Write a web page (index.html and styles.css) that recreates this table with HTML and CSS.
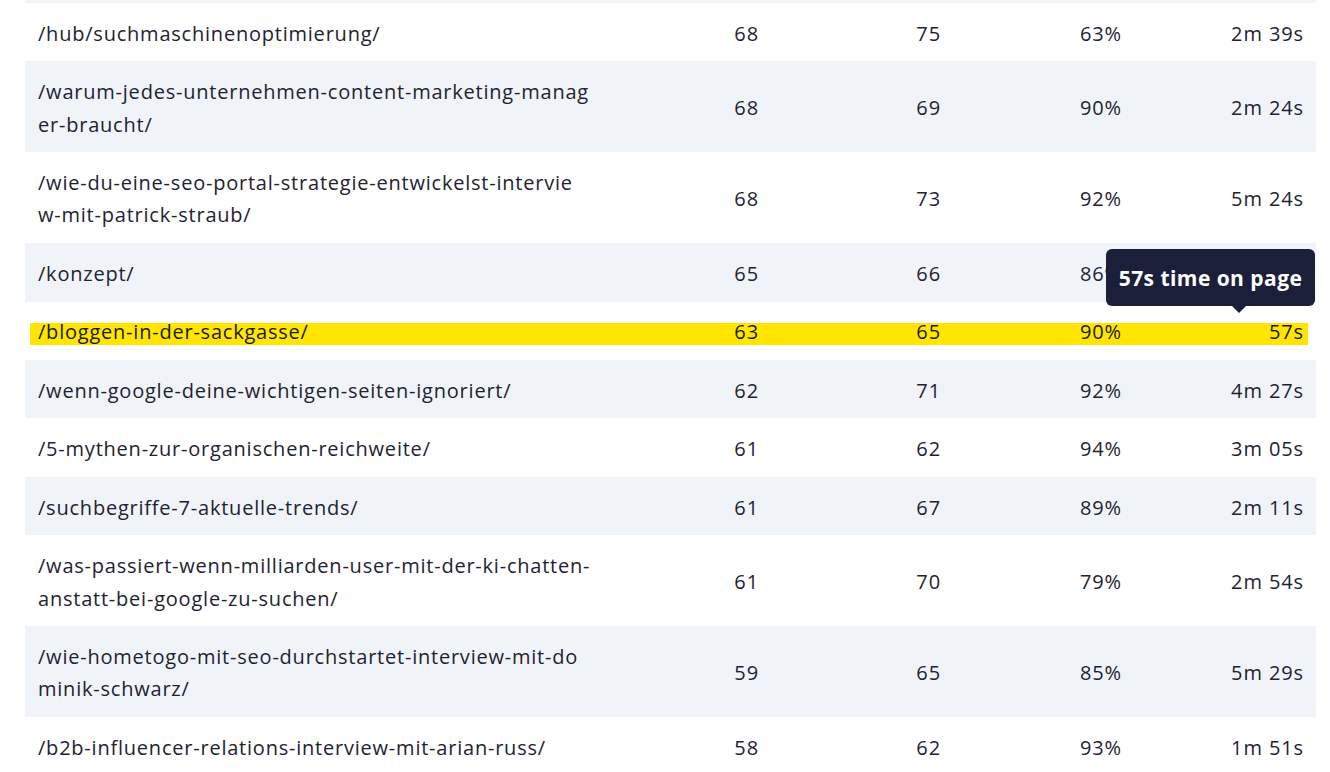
FILE: index.html
```html
<!DOCTYPE html>
<html lang="de">
<head>
<meta charset="utf-8">
<title>Seiten</title>
<link rel="stylesheet" href="styles.css">
</head>
<body>
<div class="table">
  <div class="row alt">
    <div class="cell path">/content-marketing/</div>
    <div class="cell num">69</div>
    <div class="cell num">74</div>
    <div class="cell num">88%</div>
    <div class="cell num">3m 12s</div>
  </div>
  <div class="row">
    <div class="cell path">/hub/suchmaschinenoptimierung/</div>
    <div class="cell num">68</div>
    <div class="cell num">75</div>
    <div class="cell num">63%</div>
    <div class="cell num">2m 39s</div>
  </div>
  <div class="row alt">
    <div class="cell path">/warum-jedes-unternehmen-content-marketing-manager-braucht/</div>
    <div class="cell num">68</div>
    <div class="cell num">69</div>
    <div class="cell num">90%</div>
    <div class="cell num">2m 24s</div>
  </div>
  <div class="row">
    <div class="cell path">/wie-du-eine-seo-portal-strategie-entwickelst-intervie<br>w-mit-patrick-straub/</div>
    <div class="cell num">68</div>
    <div class="cell num">73</div>
    <div class="cell num">92%</div>
    <div class="cell num">5m 24s</div>
  </div>
  <div class="row alt">
    <div class="cell path">/konzept/</div>
    <div class="cell num">65</div>
    <div class="cell num">66</div>
    <div class="cell num">86%</div>
    <div class="cell num">1m 48s</div>
  </div>
  <div class="row marked">
    <div class="cell path">/bloggen-in-der-sackgasse/</div>
    <div class="cell num">63</div>
    <div class="cell num">65</div>
    <div class="cell num">90%</div>
    <div class="cell num tip-anchor">57s
      <div class="tooltip">57s time on page</div>
    </div>
  </div>
  <div class="row alt">
    <div class="cell path">/wenn-google-deine-wichtigen-seiten-ignoriert/</div>
    <div class="cell num">62</div>
    <div class="cell num">71</div>
    <div class="cell num">92%</div>
    <div class="cell num">4m 27s</div>
  </div>
  <div class="row">
    <div class="cell path">/5-mythen-zur-organischen-reichweite/</div>
    <div class="cell num">61</div>
    <div class="cell num">62</div>
    <div class="cell num">94%</div>
    <div class="cell num">3m 05s</div>
  </div>
  <div class="row alt">
    <div class="cell path">/suchbegriffe-7-aktuelle-trends/</div>
    <div class="cell num">61</div>
    <div class="cell num">67</div>
    <div class="cell num">89%</div>
    <div class="cell num">2m 11s</div>
  </div>
  <div class="row">
    <div class="cell path">/was-passiert-wenn-milliarden-user-mit-der-ki-chatten-anstatt-bei-google-zu-suchen/</div>
    <div class="cell num">61</div>
    <div class="cell num">70</div>
    <div class="cell num">79%</div>
    <div class="cell num">2m 54s</div>
  </div>
  <div class="row alt">
    <div class="cell path">/wie-hometogo-mit-seo-durchstartet-interview-mit-dominik-schwarz/</div>
    <div class="cell num">59</div>
    <div class="cell num">65</div>
    <div class="cell num">85%</div>
    <div class="cell num">5m 29s</div>
  </div>
  <div class="row">
    <div class="cell path">/b2b-influencer-relations-interview-mit-arian-russ/</div>
    <div class="cell num">58</div>
    <div class="cell num">62</div>
    <div class="cell num">93%</div>
    <div class="cell num">1m 51s</div>
  </div>
  <div class="row alt">
    <div class="cell path">/seo-texte-schreiben/</div>
    <div class="cell num">57</div>
    <div class="cell num">60</div>
    <div class="cell num">91%</div>
    <div class="cell num">2m 02s</div>
  </div>
</div>
</body>
</html>
```

FILE: styles.css
```css
html, body {
  margin: 0;
  padding: 0;
  background: #ffffff;
}

body {
  font-family: "Open Sans", "Noto Sans", "Liberation Sans", sans-serif;
  font-size: 20px;
  letter-spacing: 0.78px;
  color: #1e2332;
  overflow: hidden;
}

.table {
  margin: -55.5px 14px 0 25px;
  display: flex;
  flex-direction: column;
}

.row {
  position: relative;
  display: grid;
  grid-template-columns: 588px 158px 182px 181px 182px;
  align-items: center;
  background: #ffffff;
}

.row.alt {
  background: #f0f4f8;
}

.cell {
  position: relative;
  z-index: 1;
  padding: 14.8px 13px 11.4px;
  line-height: 32.3px;
}

.path {
  word-break: break-all;
  padding-right: 21px;
}

.num {
  text-align: right;
  letter-spacing: 0.9px;
  padding-right: 12px;
}

.row.marked::before {
  content: "";
  position: absolute;
  left: 5px;
  right: 8px;
  top: 21.5px;
  height: 22px;
  background: #ffe500;
  z-index: 0;
}

.row.marked .cell {
  color: #1a1c14;
}

.tooltip {
  position: absolute;
  z-index: 5;
  left: -28px;
  top: -53px;
  width: 209px;
  height: 57px;
  box-sizing: border-box;
  background: #1b1f3a;
  color: #ffffff;
  font-size: 21px;
  font-weight: 700;
  letter-spacing: 0.45px;
  border-radius: 6px;
  text-align: center;
  line-height: 58px;
  white-space: nowrap;
}

.tooltip::after {
  content: "";
  position: absolute;
  left: 125px;
  top: 56px;
  border-left: 8px solid transparent;
  border-right: 8px solid transparent;
  border-top: 8px solid #1b1f3a;
}
```
